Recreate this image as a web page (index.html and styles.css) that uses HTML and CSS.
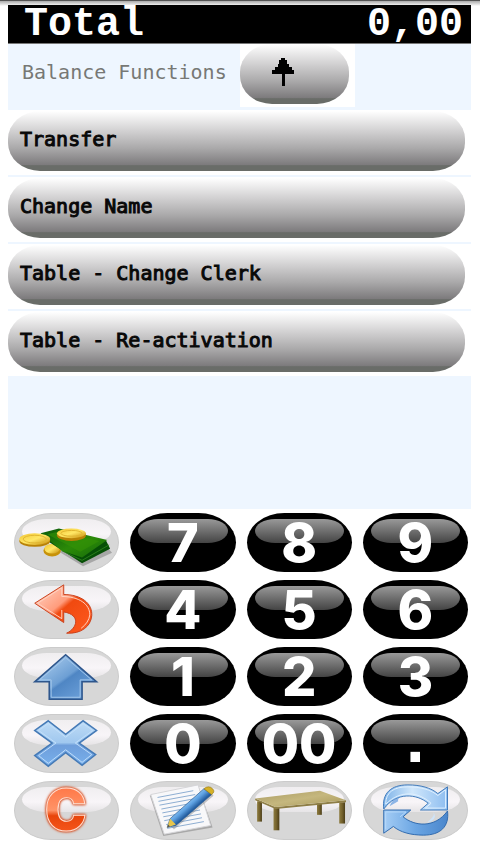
FILE: index.html
```html
<!DOCTYPE html>
<html lang="en">
<head>
<meta charset="utf-8">
<meta name="viewport" content="width=device-width, initial-scale=1">
<title>Balance Functions</title>
<link rel="stylesheet" href="styles.css">
</head>
<body>
<main class="terminal">
  <header class="total"><span>Total</span><output>0,00</output></header>
  <section class="panel">
    <div class="heading">
      <h1>Balance Functions</h1>
      <div class="up-cell">
        <button class="pill up" type="button" aria-label="Back up">
          <svg width="22" height="28" viewBox="0 0 22 28" shape-rendering="crispEdges"><path d="M9 0h4v2h2v4h2v3h3v3h2v4h-9v12h-3V16H0v-4h3V9h3V6h1V2h2z"/></svg>
        </button>
      </div>
    </div>
    <nav class="menu">
      <div class="row"><button class="pill" type="button">Transfer</button></div>
      <div class="row"><button class="pill" type="button">Change Name</button></div>
      <div class="row"><button class="pill" type="button">Table - Change Clerk</button></div>
      <div class="row"><button class="pill" type="button">Table - Re-activation</button></div>
    </nav>
  </section>
  <section class="keypad">
    <button class="key light" type="button" aria-label="Cash">
      <svg viewBox="0 0 106 59">
        <defs>
          <linearGradient id="bill" x1="0" y1="0" x2="1" y2="1"><stop offset="0" stop-color="#0b5a0b"/><stop offset=".55" stop-color="#2b8a08"/><stop offset="1" stop-color="#15690a"/></linearGradient>
          <linearGradient id="coin" x1="0" y1="0" x2="1" y2="1"><stop offset="0" stop-color="#f2c531"/><stop offset=".5" stop-color="#ffe766"/><stop offset="1" stop-color="#c58a08"/></linearGradient>
        </defs>
        <path d="M40 36 70 54 100 40 92 31z" fill="#777" opacity=".5"/>
        <ellipse cx="38" cy="38" rx="9" ry="6" fill="#c79209"/><ellipse cx="38" cy="36" rx="8" ry="5" fill="url(#coin)"/>
        <path d="M30 26 69 51 98 36 94 28z" fill="#064f06"/>
        <path d="M48 38 69 48 97 32" fill="none" stroke="#2b801b" stroke-width="1"/>
        <path d="M26 20 45 15 95 27 69 45 48 38z" fill="url(#bill)"/>
        <path d="M33 21 45 18 87 28 67 39z" fill="#359307" opacity=".6"/>
        <ellipse cx="20" cy="28" rx="16" ry="6" fill="#b98206"/><ellipse cx="20" cy="26" rx="16" ry="6" fill="url(#coin)"/><ellipse cx="20" cy="26" rx="12" ry="4" fill="none" stroke="#e0b430"/>
        <ellipse cx="58" cy="22" rx="15" ry="6" fill="#b98206"/><ellipse cx="58" cy="20" rx="15" ry="5" fill="url(#coin)"/><ellipse cx="58" cy="20" rx="11" ry="3" fill="none" stroke="#e0b430"/>
      </svg>
    </button>
    <button class="key" type="button">7</button>
    <button class="key" type="button">8</button>
    <button class="key" type="button">9</button>

    <button class="key light" type="button" aria-label="Undo">
      <svg viewBox="0 0 106 59">
        <defs><linearGradient id="undo" x1="0" y1="0" x2="1" y2="1"><stop offset="0" stop-color="#ffd9cc"/><stop offset=".42" stop-color="#ff9c7c"/><stop offset=".5" stop-color="#f04a10"/><stop offset="1" stop-color="#ff5a20"/></linearGradient></defs>
        <path d="M20 23 50 4V14C68 14 80 23 79 36 78 47 68 55 53 54 64 49 68 35 50 32V43z" fill="url(#undo)" stroke="#c8401c" stroke-width="1"/>
        <path d="M68 49Q76 43 77 35C77 24 66 16 48 16V7L23 23 48 39V30" fill="none" stroke="#ffd2c2" stroke-width="1"/>
      </svg>
    </button>
    <button class="key" type="button">4</button>
    <button class="key" type="button">5</button>
    <button class="key" type="button">6</button>

    <button class="key light" type="button" aria-label="Up">
      <svg viewBox="0 0 106 59">
        <defs><linearGradient id="arrow" x1="0" y1="0" x2="1" y2="1"><stop offset="0" stop-color="#b9d7f3"/><stop offset=".5" stop-color="#6d9fd4"/><stop offset=".54" stop-color="#4f86c4"/><stop offset="1" stop-color="#76a9e0"/></linearGradient></defs>
        <path d="M52 7 84 35H69V53H35V35H20z" fill="url(#arrow)" stroke="#2e568c" stroke-width="1.6"/>
        <path d="M52 10 79 33H67V51H37V33H25z" fill="none" stroke="#a5c8eb" stroke-width="1"/>
      </svg>
    </button>
    <button class="key" type="button">1</button>
    <button class="key" type="button">2</button>
    <button class="key" type="button">3</button>

    <button class="key light" type="button" aria-label="Cancel">
      <svg viewBox="0 0 106 59">
        <defs><linearGradient id="cross" x1="0" y1="0" x2="0" y2="1"><stop offset="0" stop-color="#c0dcf6"/><stop offset=".48" stop-color="#a0c8ef"/><stop offset=".54" stop-color="#6e9edb"/><stop offset="1" stop-color="#78b0ec"/></linearGradient></defs>
        <path d="M34 6 52 20 70 6 84 16 66 29 83 41 69 52 52 39 34 53 20 42 38 29 20 16z" fill="url(#cross)" stroke="#467bb7" stroke-width="1.6"/>
        <path d="M34 9 52 23 70 9 80 16 62 29 79 41 69 49 52 36 34 50 24 42 42 29 24 16z" fill="none" stroke="#c3e0fb" stroke-width="1"/>
      </svg>
    </button>
    <button class="key" type="button">0</button>
    <button class="key" type="button">00</button>
    <button class="key point" type="button">.</button>

    <button class="key light" type="button" aria-label="Clear">
      <svg viewBox="0 0 106 59">
        <defs><linearGradient id="clear" x1="0" y1="0" x2="0" y2="1"><stop offset="0" stop-color="#ff6a38"/><stop offset=".5" stop-color="#ff9468"/><stop offset=".58" stop-color="#e8450b"/><stop offset="1" stop-color="#ff6329"/></linearGradient></defs>
        <text class="clear" x="52" y="50" text-anchor="middle">C</text>
      </svg>
    </button>
    <button class="key light" type="button" aria-label="Note">
      <svg viewBox="0 0 106 59">
        <defs><linearGradient id="pencil" gradientUnits="userSpaceOnUse" x1="55" y1="22" x2="62" y2="30"><stop offset="0" stop-color="#8fc6f5"/><stop offset=".5" stop-color="#5c9fe0"/><stop offset="1" stop-color="#245d9f"/></linearGradient></defs>
        <path d="M19 14 33 56 84 47 70 6z" fill="#888" opacity=".6"/>
        <path d="M20 13 69 3 82 45 34 54z" fill="#f8f8fa" stroke="#d4d4d8" stroke-width="1"/>
        <path d="M27 16 64 9M28 20 66 13M29 24 67 17M31 28 68 21M32 32 69 25M33 36 71 29M34 40 72 33M36 44 73 37M37 48 75 41" stroke="#8aabd0" stroke-width="1"/>
        <path d="M43 48 84 13" stroke="#777" stroke-width="3" opacity=".4"/>
        <path d="M37 47 40 38 75 7 83 13 46 45z" fill="url(#pencil)" stroke="#285a91" stroke-width=".7"/>
        <path d="M37 47 40 38 46 44z" fill="#e8c54a"/><path d="m37 47 1-3 2 2z" fill="#555"/>
        <path d="M75 7Q80 3 84 7 87 10 83 13z" fill="#d6b126" stroke="#967a17" stroke-width=".7"/>
      </svg>
    </button>
    <button class="key light" type="button" aria-label="Table">
      <svg viewBox="0 0 106 59">
        <defs>
          <linearGradient id="leg"><stop offset="0" stop-color="#8c7b40"/><stop offset=".5" stop-color="#74622c"/><stop offset="1" stop-color="#4a3d18"/></linearGradient>
          <linearGradient id="top" x1="0" y1="0" x2="1" y2="1"><stop offset="0" stop-color="#aa9b63"/><stop offset=".5" stop-color="#c5b77e"/><stop offset="1" stop-color="#a79759"/></linearGradient>
        </defs>
        <path d="M71 22h5v12h-5z" fill="url(#leg)"/>
        <path d="M9 20h5v21H9z" fill="url(#leg)"/>
        <path d="M26 26h6v24h-6z" fill="url(#leg)"/>
        <path d="M94 21h6v22h-6z" fill="url(#leg)"/>
        <path d="M7 17 28 26 101 19V21L28 28 7 19z" fill="#8e7e47"/>
        <path d="M7 17 74 9 101 19 28 26z" fill="url(#top)"/>
      </svg>
    </button>
    <button class="key light" type="button" aria-label="Refresh">
      <svg viewBox="0 0 106 59">
        <defs><linearGradient id="turn"><stop offset="0" stop-color="#7eb3e8"/><stop offset=".45" stop-color="#d0e7fb"/><stop offset="1" stop-color="#8dbdf0"/></linearGradient>
        <linearGradient id="turn-back"><stop offset="0" stop-color="#a5cdf5"/><stop offset=".5" stop-color="#6aa5e3"/><stop offset="1" stop-color="#4a86cc"/></linearGradient></defs>
        <path d="M20 28C18 12 27 3 45 3 58 3 69 6 76 12L86 5V29H58L66 22C54 12 33 10 20 28z" fill="url(#turn)" stroke="#3e78ba" stroke-width="1"/>
        <path d="M22 23C22 10 31 5 45 5 58 5 69 8 76 14L84 8V27H63L69 22C56 10 37 8 22 23z" fill="none" stroke="#e0f0ff" stroke-width="1"/>
        <path d="M86 30C88 46 79 55 61 55 48 55 37 52 30 46L20 53V29H48L40 36C52 46 73 48 86 30z" fill="url(#turn-back)" stroke="#2f69ad" stroke-width="1"/>
        <path d="M22 49V31H43L37 36" fill="none" stroke="#b9dafa" stroke-width="1"/>
        <path d="M35 20Q34 18 37 15L30 19Q27 22 26 25z" fill="#5f9ade" opacity=".7"/>
        <path d="M70 37Q73 34 71 31 76 36 69 41L65 42z" fill="#cfe4f9"/>
      </svg>
    </button>
  </section>
</main>
</body>
</html>
```
FILE: styles.css
```css
* { box-sizing: border-box; }

body {
  margin: 0;
  background: #fff;
}

button {
  border: 0;
  padding: 0;
  font: inherit;
  cursor: pointer;
}

svg { display: block; }

.terminal {
  display: flex;
  flex-direction: column;
  min-height: 100vh;
  padding-top: 5px;
  background: linear-gradient(#555 0, #555 1px, #aaa 1px, #fff 6px) no-repeat;
}

.total {
  display: flex;
  justify-content: space-between;
  align-items: center;
  height: 39px;
  margin: 0 9px 0 8px;
  padding: 2px 8px 0 16px;
  background: #000;
  border-bottom: 1px solid #777;
  color: #fff;
  font: bold 40px/38px "Liberation Mono", monospace;
}

.panel {
  flex: 1;
  margin: 0 9px 0 8px;
  background: #eef6ff;
}

.heading {
  display: flex;
  align-items: flex-start;
  height: 66px;
}

h1 {
  flex: none;
  width: 232px;
  margin: 0;
  padding-left: 14px;
  color: #777875;
  font: 20px/56px "DejaVu Sans Mono", monospace;
  white-space: nowrap;
}

.up-cell {
  width: 115px;
  height: 63px;
  padding-right: 6px;
  background: #fff;
}

.pill {
  display: block;
  width: 100%;
  height: 60px;
  padding: 0 12px 4px;
  border-radius: 32px / 28px;
  background: linear-gradient(#fff 0, #d2d1d2 33%, #aaa9aa 62%, #7c7a7c 90%, #696c68 91%, #696c68 100%);
  color: #080808;
  font: 20px/56px "DejaVu Sans Mono", monospace;
  -webkit-text-stroke: 1px #080808;
  text-align: left;
}

.up { padding-left: 32px; }

.row {
  height: 67px;
  padding: 1px 6px 0 0;
  background: #fff;
  border-bottom: 2px solid #eef6ff;
}

.keypad {
  display: grid;
  grid-template-columns: repeat(4, 1fr);
  gap: 8px 11px;
  padding: 4px 12px 14px 14px;
}

.key {
  position: relative;
  height: 59px;
  border-radius: 38px / 30px;
  background: #000;
  color: #fff;
  font: 800 54px/59px Inter, "Liberation Sans", sans-serif;
  isolation: isolate;
}

.key::before {
  content: "";
  position: absolute;
  z-index: -1;
  inset: 6px 8px 29px;
  border-radius: 20px / 12px;
  background: linear-gradient(#999, #444);
}

.point { font-family: "DejaVu Sans", sans-serif; }

.light {
  background: #d7d7d7;
  border: 1px solid #cbcbcb;
}

.light::before {
  inset: 5px 7px 27px;
  border-radius: 28px / 14px;
  background: linear-gradient(#f0eef0, #f8f5f8 60%, #e6e4e6);
}

.light svg {
  width: 100%;
  height: 57px;
  overflow: visible;
}

.clear {
  font: 900 58px Inter, "Liberation Sans", sans-serif;
  fill: url(#clear);
  stroke: #ffe2d6;
  stroke-width: 1px;
  filter: drop-shadow(0 0 1px #d4491a) drop-shadow(0 0 1px #d4491a);
}
```
